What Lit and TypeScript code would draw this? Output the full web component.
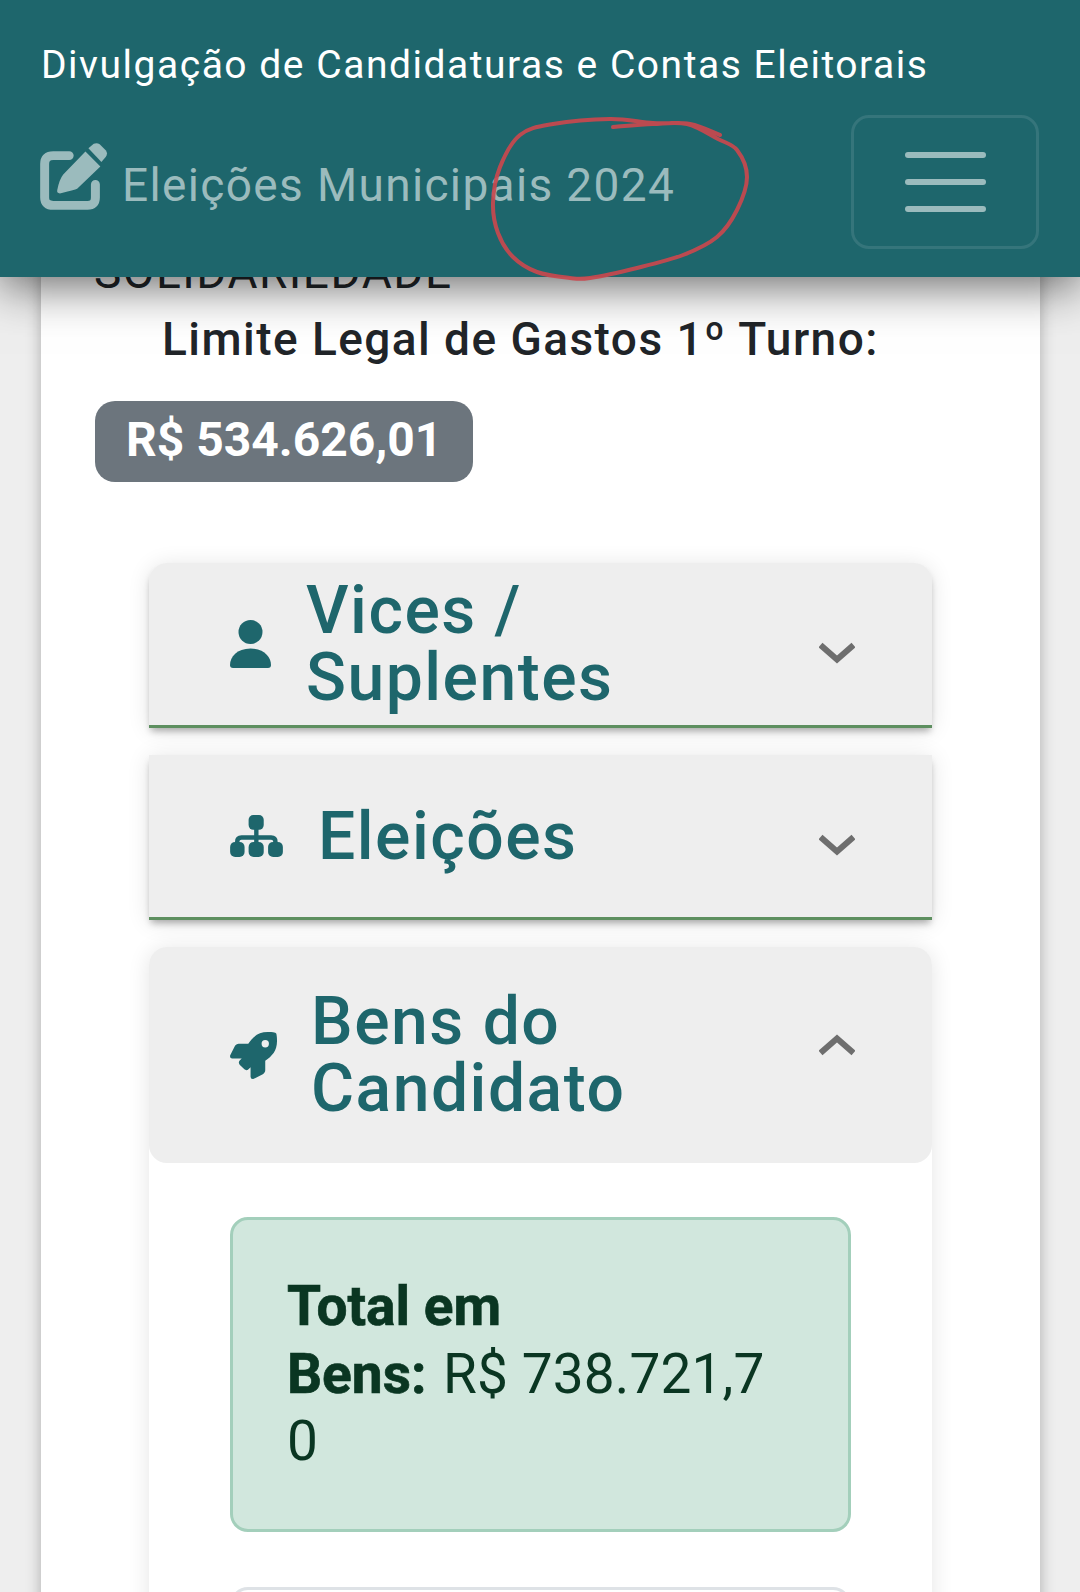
import { LitElement, html, css, svg } from "lit";
import { customElement } from "lit/decorators.js";

const ROCKET = "M505.12019,19.09375c-1.18945-5.53125-6.65819-11-12.207-12.1875C460.716,0,435.507,0,410.40747,0,307.17523,0,245.26909,55.20312,199.05238,128H94.83772c-16.34763.01562-35.55658,11.875-42.88664,26.48438L2.51562,253.29688A28.4,28.4,0,0,0,0,264a24.00867,24.00867,0,0,0,24.00582,24H127.81618l-22.47457,22.46875c-11.36521,11.36133-12.99607,32.25781,0,45.25L156.24582,406.625c11.15623,11.1875,32.15619,13.15625,45.27726,0l22.47457-22.46875V488a24.00867,24.00867,0,0,0,24.00581,24,28.55934,28.55934,0,0,0,10.707-2.51562l98.72834-49.39063c14.62888-7.29687,26.50776-26.5,26.50776-42.85937V312.79688c72.59753-46.3125,128.03493-108.40626,128.03493-211.09376C512.07526,76.5,512.07526,51.29688,505.12019,19.09375ZM384.04033,168A40,40,0,1,1,424.05,128,40.02322,40.02322,0,0,1,384.04033,168Z";

// Hand-drawn annotation, traced from the reference.
const PTS: [number, number][] = [
  [613,127],[653,124],[687,124],[718,139],[737,150],[747,177],[737,210],[717,237],[683,255],[637,268],
  [590,278],[570,278],[537,272],[513,257],[498,233],[493,203],[500,167],[520,135],[553,124],[610,119],
  [653,123],[690,124],[720,135],
];
function smooth(p: [number, number][]) {
  let d = `M${p[0][0]} ${p[0][1]}`;
  for (let i = 0; i < p.length - 1; i++) {
    const a = p[Math.max(i - 1, 0)], b = p[i], c = p[i + 1], e = p[Math.min(i + 2, p.length - 1)];
    d += ` C${b[0] + (c[0] - a[0]) / 6} ${b[1] + (c[1] - a[1]) / 6} ${c[0] - (e[0] - b[0]) / 6} ${c[1] - (e[1] - b[1]) / 6} ${c[0]} ${c[1]}`;
  }
  return d;
}

const chevron = (up: boolean) => html`
  <svg class="chev ${up ? "up" : "down"}" viewBox="0 0 36 22" width="36" height="22" aria-hidden="true">
    ${up
      ? svg`<polyline points="1.500,19 18,4.500 34.500,19" fill="none" stroke="currentColor" stroke-width="6"></polyline>`
      : svg`<polyline points="1.500,3 18,17.500 34.500,3" fill="none" stroke="currentColor" stroke-width="6"></polyline>`}
  </svg>`;

@customElement("app-root")
export class AppRoot extends LitElement {
  static styles = css`
    :host {
      display: block;
      position: relative;
      width: 1080px;
      height: 1592px;
      overflow: hidden;
      background: #eeeeee;
      font-family: Roboto, "Liberation Sans", sans-serif;
      color: #212529;
    }
    svg { display: block; flex: none; }

    /* Fixed top bar: lies over the scrolled page */
    .bar {
      position: absolute;
      inset: 0 0 auto 0;
      height: 277px;
      box-sizing: border-box;
      padding: 35px 41px 0 40px;
      background: #1e666c;
      box-shadow: 0 8px 46px rgba(0, 0, 0, 0.62);
      z-index: 2;
    }
    .title {
      margin-left: 1px;
      font-size: 39px;
      line-height: 60px;
      color: #fff;
      letter-spacing: 1.52px;
      white-space: nowrap;
    }
    .nav {
      margin-top: 20px;
      display: flex;
      align-items: center;
      justify-content: space-between;
    }
    .brand { display: flex; align-items: center; color: #9bbbbd; }
    .brand svg { margin: 0 14px 11px 0; }
    .brand span {
      font-size: 46px;
      letter-spacing: 1.35px;
      line-height: 60px;
      margin-top: 6px;
      white-space: nowrap;
    }
    .toggler {
      box-sizing: border-box;
      width: 188px;
      height: 134px;
      border: 3px solid #35757b;
      border-radius: 18px;
      display: flex;
      flex-direction: column;
      align-items: center;
      justify-content: center;
      gap: 21px;
    }
    .toggler i {
      display: block;
      width: 81px;
      height: 6px;
      border-radius: 3px;
      background: #9bbbbd;
    }
    .scribble { position: absolute; left: 0; top: 0; z-index: 3; pointer-events: none; }

    /* Page */
    .page { padding: 0 40px 0 41px; }
    .card {
      background: #fff;
      box-shadow: 0 0 14px rgba(0, 0, 0, 0.28);
      padding: 239px 53px 0;
      height: 1700px;
      box-sizing: border-box;
    }
    .party { font-size: 46px; letter-spacing: 1.5px; line-height: 66px; }
    .limit {
      margin: 1px 0 0 68px;
      font-size: 46px;
      letter-spacing: 1.45px;
      line-height: 66px;
      font-weight: 500;
      white-space: nowrap;
    }
    .badge {
      display: inline-block;
      margin: 29px 0 0 1px;
      padding: 0 31px;
      height: 81px;
      line-height: 77px;
      border-radius: 20px;
      background: #6c757d;
      color: #fff;
      font-size: 48px;
      font-weight: 700;
      white-space: nowrap;
    }
    .accordion {
      margin: 81px 55px 0;
      display: flex;
      flex-direction: column;
      gap: 27px;
    }
    .item {
      background: #fff;
      border-radius: 18px 18px 0 0;
      box-shadow: 0 2px 22px rgba(0, 0, 0, 0.11);
    }
    .item.mid { border-radius: 0; }
    .head {
      box-sizing: border-box;
      display: flex;
      align-items: center;
      padding: 0 77px 0 81px;
      background: #eeeeee;
      border-radius: inherit;
      color: #1e666c;
    }
    .head.closed {
      height: 165px;
      border-bottom: 3px solid #5d8f5f;
      box-shadow: 0 5px 7px -2px rgba(0, 0, 0, 0.3);
    }
    .head.open { height: 216px; border-radius: 18px; }
    .head h2 {
      flex: 1;
      margin: 0;
      font-size: 66px;
      letter-spacing: 1.5px;
      line-height: 67px;
      font-weight: 500;
    }
    .i-user { margin-right: 35px; }
    .i-map { margin-right: 35px; }
    .i-rocket { margin-right: 34px; }
    .chev { color: #6e6e6e; }
    .chev.down { margin-top: 18px; }
    .chev.up { margin-bottom: 20px; }

    .body { padding: 54px 81px 0 81px; }
    .alert {
      box-sizing: border-box;
      height: 315px;
      padding: 53px 68px 0 54px;
      background: #d1e7dd;
      border: 3px solid #a3cfbb;
      border-radius: 18px;
      color: #0a3622;
      font-size: 55px;
      line-height: 67.5px;
      overflow-wrap: anywhere;
    }
    .alert strong { font-weight: 700; -webkit-text-stroke: 0.7px currentColor; }
    .alert .value { margin-left: 3px; letter-spacing: 0.1px; }
    .next {
      margin-top: 55px;
      height: 100px;
      border: 3px solid #dee2e6;
      border-radius: 18px;
    }
  `;

  render() {
    return html`
      <main class="page">
        <section class="card">
          <div class="party">SOLIDARIEDADE</div>
          <div class="limit">Limite Legal de Gastos 1º Turno:</div>
          <span class="badge">R$ 534.626,01</span>

          <div class="accordion">
            <div class="item">
              <div class="head closed">
                <svg class="i-user" width="41" height="48" viewBox="0 0 41 48" fill="currentColor" aria-hidden="true">
                  <circle cx="20.5" cy="12" r="12"></circle>
                  <path d="M3 48C1 48 0 47 0 45C0 37 7 28.500 20.500 28.500C34 28.500 41 37 41 45C41 47 40 48 38 48Z"></path>
                </svg>
                <h2>Vices /<br />Suplentes</h2>
                ${chevron(false)}
              </div>
            </div>
            <div class="item mid">
              <div class="head closed">
                <svg class="i-map" width="53" height="42" viewBox="0 0 157 125" fill="currentColor" aria-hidden="true">
                  <rect x="55" y="0" width="45" height="44" rx="14"></rect>
                  <rect x="0" y="80" width="43" height="45" rx="15"></rect>
                  <rect x="55" y="80" width="45" height="45" rx="15"></rect>
                  <rect x="113" y="80" width="44" height="45" rx="15"></rect>
                  <path d="M21 88V80Q21 67 34 67H122Q135 67 135 80V88M78 40V88" fill="none" stroke="currentColor" stroke-width="13"></path>
                </svg>
                <h2>Eleições</h2>
                ${chevron(false)}
              </div>
            </div>
            <div class="item">
              <div class="head open">
                <svg class="i-rocket" width="47" height="47" viewBox="0 0 512 512" fill="currentColor" aria-hidden="true">
                  <path d="${ROCKET}"></path>
                </svg>
                <h2>Bens do<br />Candidato</h2>
                ${chevron(true)}
              </div>
              <div class="body">
                <div class="alert"><strong>Total em Bens:</strong>&nbsp;<span class="value">R$&nbsp;738.721,70</span></div>
                <div class="next"></div>
              </div>
            </div>
          </div>
        </section>
      </main>

      <header class="bar">
        <div class="title">Divulgação de Candidaturas e Contas Eleitorais</div>
        <div class="nav">
          <div class="brand">
            <svg width="68" height="68" viewBox="60 40 205 205" aria-hidden="true">
              <path d="M148 78H100Q74 78 74 103V204Q74 228 100 228H203Q227 228 227 204V165" fill="none" stroke="currentColor" stroke-width="27" stroke-linecap="round"></path>
              <path d="M130 135L197 66L242 111L172 178Q165 182 120 192Q110 192 112 182Q118 150 130 135Z" fill="currentColor"></path>
              <path d="M206 56L222 42Q232 38 240 44L258 62Q266 72 258 82L245 97Z" fill="currentColor"></path>
            </svg>
            <span>Eleições Municipais 2024</span>
          </div>
          <div class="toggler"><i></i><i></i><i></i></div>
        </div>
      </header>

      <svg class="scribble" width="1080" height="300" viewBox="0 0 1080 300" aria-hidden="true">
        <path d="${smooth(PTS)}" fill="none" stroke="#c9484e" stroke-width="4" stroke-linecap="round" stroke-linejoin="round" opacity="0.92"></path>
      </svg>
    `;
  }
}
